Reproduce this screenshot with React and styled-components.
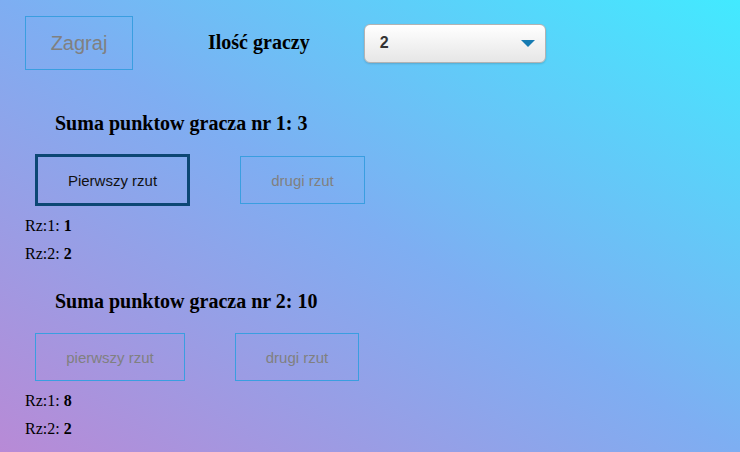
import React from "react";
import styled, { createGlobalStyle } from "styled-components";

const GlobalStyle = createGlobalStyle`
    html, body {
        margin: 0;
        padding: 0;
    }
    body {
        font-family: "Liberation Serif", "Times New Roman", serif;
        color: #000;
    }
`;

const Page = styled.div`
    width: 740px;
    height: 452px;
    overflow: hidden;
    box-sizing: border-box;
    padding: 16px 0 0 25px;
    background: linear-gradient(to top right, #b88ad6 0%, #7eaef2 50%, #42eaff 100%);
`;

const TopBar = styled.div`
    display: flex;
    align-items: center;
    height: 54px;
`;

const Button = styled.button`
    box-sizing: border-box;
    display: flex;
    align-items: center;
    justify-content: center;
    height: ${(p) => (p.$big ? "54px" : p.$active ? "52px" : "48px")};
    width: ${(p) => p.$w}px;
    margin-left: ${(p) => p.$ml || 0}px;
    padding: 0;
    background: transparent;
    border: ${(p) => (p.$active ? "3px solid #0c4774" : "1px solid #3a9ee0")};
    color: ${(p) => (p.$active ? "#111" : "#808080")};
    font-family: "Liberation Sans", Arial, sans-serif;
    font-size: ${(p) => (p.$big ? "20px" : "15px")};
    cursor: ${(p) => (p.$active ? "pointer" : "default")};
`;

const Label = styled.span`
    font-weight: bold;
    font-size: 20px;
    margin-left: 75px;
    margin-top: -2px;
`;

const SelectBox = styled.div`
    box-sizing: border-box;
    display: flex;
    align-items: center;
    justify-content: space-between;
    width: 182px;
    height: 39px;
    margin-left: 54px;
    margin-top: 0;
    padding: 0 10px 0 15px;
    border: 1px solid #b3b3b3;
    border-radius: 6px;
    background: linear-gradient(#ffffff, #e6e6e6);
    box-shadow: 0 1px 2px rgba(0, 0, 0, 0.15);
    font-family: "Liberation Sans", Arial, sans-serif;
    font-weight: bold;
    font-size: 16px;
    color: #333;
`;

const Caret = styled.span`
    width: 0;
    height: 0;
    border-left: 7px solid transparent;
    border-right: 7px solid transparent;
    border-top: 7px solid #167bb2;
`;

const PlayerTitle = styled.h3`
    margin: ${(p) => p.$mt}px 0 0 30px;
    font-size: 20px;
    font-weight: bold;
    line-height: 22px;
`;

const ThrowRow = styled.div`
    display: flex;
    align-items: center;
    margin: ${(p) => p.$mt}px 0 0 10px;
`;

const Result = styled.div`
    font-size: 16px;
    line-height: 28px;
    height: 28px;
`;

const Results = styled.div`
    margin-top: ${(p) => p.$mt}px;
`;

function Player({ nr, sum, first, second, active, titleTop, rowTop, firstWidth, secondWidth, firstLabel }) {
    return (
        <>
            <PlayerTitle $mt={titleTop}>
                Suma punktow gracza nr {nr}: {sum}
            </PlayerTitle>
            <ThrowRow $mt={rowTop}>
                <Button $active={active} $w={firstWidth}>{firstLabel}</Button>
                <Button $w={secondWidth} $ml={50}>drugi rzut</Button>
            </ThrowRow>
            <Results $mt={6}>
                <Result>Rz:1: <b>{first}</b></Result>
                <Result>Rz:2: <b>{second}</b></Result>
            </Results>
        </>
    );
}

export default function App() {
    return (
        <Page>
            <GlobalStyle />
            <TopBar>
                <Button $big $w={108}>Zagraj</Button>
                <Label>Ilość graczy</Label>
                <SelectBox>
                    2
                    <Caret />
                </SelectBox>
            </TopBar>
            <Player
                nr={1}
                sum={3}
                first={1}
                second={2}
                active
                titleTop={42}
                rowTop={20}
                firstWidth={155}
                secondWidth={125}
                firstLabel="Pierwszy rzut"
            />
            <Player
                nr={2}
                sum={10}
                first={8}
                second={2}
                titleTop={22}
                rowTop={21}
                firstWidth={150}
                secondWidth={124}
                firstLabel="pierwszy rzut"
            />
        </Page>
    );
}
